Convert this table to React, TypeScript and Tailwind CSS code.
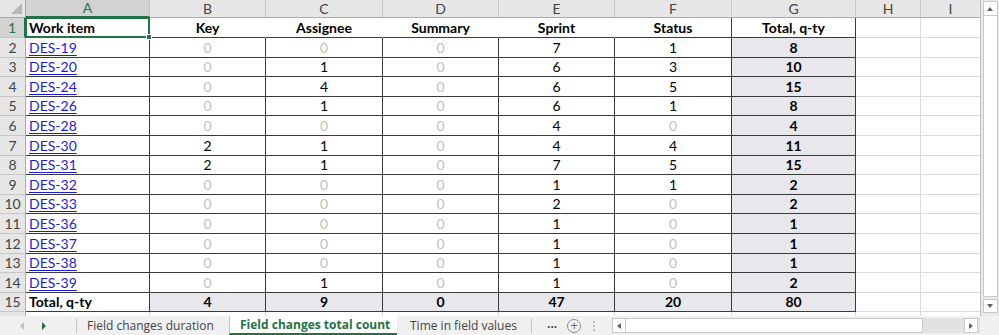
const COLS = ['A', 'B', 'C', 'D', 'E', 'F', 'G', 'H', 'I'];
const COL_W = ['w-[124px]', 'w-[116px]', 'w-[117px]', 'w-[116px]', 'w-[116px]', 'w-[117px]', 'w-[124px]', 'w-[65px]', 'w-[60px]'];
const ROW_H = ['h-[20px]', 'h-[20px]', 'h-[19px]', 'h-[20px]', 'h-[19px]', 'h-[20px]', 'h-[20px]', 'h-[19px]', 'h-[20px]', 'h-[19px]', 'h-[20px]', 'h-[20px]', 'h-[19px]', 'h-[20px]', 'h-[19px]'];

const HEAD = ['Work item', 'Key', 'Assignee', 'Summary', 'Sprint', 'Status', 'Total, q-ty'];

const DATA: [string, number[]][] = [
  ['DES-19', [0, 0, 0, 7, 1, 8]],
  ['DES-20', [0, 1, 0, 6, 3, 10]],
  ['DES-24', [0, 4, 0, 6, 5, 15]],
  ['DES-26', [0, 1, 0, 6, 1, 8]],
  ['DES-28', [0, 0, 0, 4, 0, 4]],
  ['DES-30', [2, 1, 0, 4, 4, 11]],
  ['DES-31', [2, 1, 0, 7, 5, 15]],
  ['DES-32', [0, 0, 0, 1, 1, 2]],
  ['DES-33', [0, 0, 0, 2, 0, 2]],
  ['DES-36', [0, 0, 0, 1, 0, 1]],
  ['DES-37', [0, 0, 0, 1, 0, 1]],
  ['DES-38', [0, 0, 0, 1, 0, 1]],
  ['DES-39', [0, 1, 0, 1, 0, 2]],
];
const TOTALS = [4, 9, 0, 47, 20, 80];

const dark = 'border-r border-b border-[#3a3a3a]';
const grid = 'border-r border-b border-[#dadada]';

function RowHead({ n, h, active }: { n: number; h: string; active?: boolean }) {
  return (
    <div
      className={`${h} w-[26px] shrink-0 flex items-center justify-center border-b ${
        active
          ? 'bg-[#d2d2d2] text-[#217346] border-r-2 border-r-[#217346] border-b-[#c6c6c6]'
          : 'bg-[#e6e6e6] text-[#444] border-r border-r-[#ababab] border-b-[#c6c6c6]'
      }`}
    >
      {n}
    </div>
  );
}

function Extra({ h }: { h: string }) {
  return (
    <>
      <div className={`${h} ${COL_W[7]} shrink-0 ${grid}`} />
      <div className={`${h} ${COL_W[8]} shrink-0 ${grid}`} />
    </>
  );
}

export default function App() {
  return (
    <div className="w-[999px] h-[335px] overflow-hidden bg-white flex flex-col text-[14px] leading-none text-black font-['Lato','Liberation_Sans',sans-serif]">
      <div className="flex h-[316px]">
        <div className="w-[981px] flex flex-col overflow-hidden border-r border-[#bcbcbc]">
          {/* column letters */}
          <div className="flex h-[18px] shrink-0">
            <div className="w-[26px] shrink-0 bg-[#e6e6e6] border-r border-b border-[#ababab] relative">
              <div className="absolute right-[3px] bottom-[3px] w-0 h-0 border-l-[11px] border-l-transparent border-b-[11px] border-b-[#b8b8b8]" />
            </div>
            {COLS.map((c, i) => (
              <div
                key={c}
                className={`${COL_W[i]} shrink-0 flex items-center justify-center border-r border-r-[#c6c6c6] ${
                  i === 0 ? 'bg-[#d2d2d2] text-[#217346] border-b-2 border-b-[#217346]' : 'bg-[#e6e6e6] text-[#444] border-b border-b-[#ababab]'
                }`}
              >
                {c}
              </div>
            ))}
          </div>

          {/* row 1 */}
          <div className={`flex shrink-0 ${ROW_H[0]}`}>
            <RowHead n={1} h={ROW_H[0]} active />
            {HEAD.map((t, i) => (
              <div
                key={t}
                className={`${COL_W[i]} shrink-0 flex items-center font-bold border-b border-b-[#3a3a3a] border-r ${
                  i === 0 ? 'justify-start pl-[3px] relative' : 'justify-center'
                } ${i >= 5 ? 'border-r-[#3a3a3a]' : 'border-r-white'}`}
              >
                {t}
                {i === 0 && (
                  <div className="absolute -left-px -top-px w-[125px] h-[21px] border-2 border-[#217346]">
                    <div className="absolute -right-[4px] -bottom-[4px] w-[6px] h-[6px] bg-[#217346] border border-white" />
                  </div>
                )}
              </div>
            ))}
            <Extra h={ROW_H[0]} />
          </div>

          {/* data rows */}
          {DATA.map(([key, vals], r) => (
            <div key={key} className={`flex shrink-0 ${ROW_H[r + 1]}`}>
              <RowHead n={r + 2} h={ROW_H[r + 1]} />
              <div className={`${COL_W[0]} shrink-0 flex items-center pl-[3px] ${dark}`}>
                <span className="text-[#1a1ae6] underline underline-offset-2">{key}</span>
              </div>
              {vals.map((v, i) => (
                <div
                  key={i}
                  className={`${COL_W[i + 1]} shrink-0 flex items-center justify-center ${dark} ${
                    i === 5 ? 'bg-[#e8e8ec] font-bold' : v === 0 ? 'text-[#bfbfbf]' : ''
                  }`}
                >
                  {v}
                </div>
              ))}
              <Extra h={ROW_H[r + 1]} />
            </div>
          ))}

          {/* totals */}
          <div className={`flex shrink-0 ${ROW_H[14]}`}>
            <RowHead n={15} h={ROW_H[14]} />
            <div className={`${COL_W[0]} shrink-0 flex items-center pl-[3px] font-bold ${dark}`}>Total, q-ty</div>
            {TOTALS.map((v, i) => (
              <div key={i} className={`${COL_W[i + 1]} shrink-0 flex items-center justify-center font-bold bg-[#e8e8ec] ${dark}`}>
                {v}
              </div>
            ))}
            <Extra h={ROW_H[14]} />
          </div>

          {/* row 16, cut off by the tab bar */}
          <div className="flex shrink-0 h-[20px]">
            <RowHead n={16} h="h-[20px]" />
            {COL_W.map((w, i) => (
              <div key={i} className={`${w} h-[20px] shrink-0 ${grid}`} />
            ))}
          </div>
        </div>

        {/* vertical scrollbar */}
        <div className="flex-1 bg-[#e9e9e9] flex flex-col items-center pl-[1px] pr-[1px]">
          <div className="w-[15px] h-[15px] mt-[1px] bg-white border border-[#c9c9c9] flex items-center justify-center">
            <div className="w-0 h-0 border-x-[3px] border-x-transparent border-b-[4px] border-b-[#606060]" />
          </div>
          <div className="w-[15px] flex-1 bg-white border-x border-b border-[#c9c9c9]" />
          <div className="w-[15px] h-[14px] mt-[2px] mb-[3px] bg-white border border-[#c9c9c9] flex items-center justify-center">
            <div className="w-0 h-0 border-x-[3px] border-x-transparent border-t-[4px] border-t-[#606060]" />
          </div>
        </div>
      </div>

      {/* sheet tabs */}
      <div className="flex h-[19px] bg-[#f0f0f0] text-[12px] text-[#444] font-['Open_Sans','Liberation_Sans',sans-serif] leading-none">
        <div className="w-[77px] shrink-0 flex items-center border-r border-[#c6c6c6] my-[2px]">
          <div className="ml-[20px] w-0 h-0 border-y-[4px] border-y-transparent border-r-[4px] border-r-[#c0c0c0]" />
          <div className="ml-[18px] w-0 h-0 border-y-[4px] border-y-transparent border-l-[4px] border-l-[#217346]" />
        </div>
        <div className="w-[152px] shrink-0 flex items-center pl-[10px]">Field changes duration</div>
        <div className="w-[168px] shrink-0 flex items-center pl-[10px] bg-white font-bold text-[#217346] border-b-2 border-[#217346] border-l border-l-[#c6c6c6]">
          Field changes total count
        </div>
        <div className="w-[135px] shrink-0 flex items-center pl-[13px] border-r border-[#c6c6c6] my-[2px]">Time in field values</div>
        <div className="w-[80px] shrink-0 flex items-center">
          <span className="ml-[15px] font-bold text-[#444] -mt-[4px]">...</span>
          <span className="ml-[10px] w-[14px] h-[14px] rounded-full border border-[#8a8a8a] flex items-center justify-center text-[#6a6a6a] text-[13px] leading-none">+</span>
          <span className="ml-[12px] flex flex-col gap-[2px]">
            <span className="w-[2px] h-[2px] bg-[#bdbdbd]" />
            <span className="w-[2px] h-[2px] bg-[#bdbdbd]" />
            <span className="w-[2px] h-[2px] bg-[#bdbdbd]" />
          </span>
        </div>
        <div className="w-[368px] shrink-0 flex items-center bg-[#e2e2e2] my-[2px]">
          <div className="w-[14px] h-[15px] bg-white border border-[#c9c9c9] flex items-center justify-center">
            <div className="w-0 h-0 border-y-[3px] border-y-transparent border-r-[4px] border-r-[#606060]" />
          </div>
          <div className="w-[297px] h-[15px] bg-white border-y border-r border-[#c9c9c9]" />
          <div className="flex-1" />
          <div className="w-[14px] h-[15px] mr-[2px] bg-white border border-[#c9c9c9] flex items-center justify-center">
            <div className="w-0 h-0 border-y-[3px] border-y-transparent border-l-[4px] border-l-[#606060]" />
          </div>
        </div>
      </div>
    </div>
  );
}
